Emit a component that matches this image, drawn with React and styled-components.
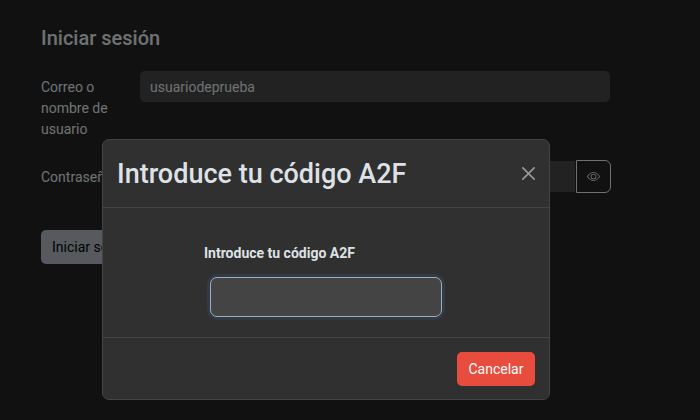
import React from "react";
import styled, { createGlobalStyle } from "styled-components";

const GlobalStyle = createGlobalStyle`
  *, *::before, *::after { box-sizing: border-box; }
  body {
    margin: 0;
    min-height: 100vh;
    background: #222;
    color: #dee2e6;
    font-family: Roboto, "Liberation Sans", sans-serif;
    font-size: 14px;
    line-height: 22px;
  }
  button, input { font: inherit; }
`;

const Page = styled.main`
  padding: 24px 89px 24px 41px;
`;

const PageTitle = styled.h1`
  margin: 0 0 18px;
  font-size: 20px;
  font-weight: 500;
  line-height: 28px;
`;

const Row = styled.div`
  display: grid;
  grid-template-columns: 74px 1fr;
  column-gap: 24px;
  align-items: start;
  margin-bottom: 20px;
`;

const Label = styled.label`
  padding-top: 7px;
  line-height: 21px;
`;

const InputGroup = styled.div`
  display: flex;
`;

const Field = styled.input`
  flex: 1;
  min-width: 0;
  height: 33px;
  padding: 0 10px;
  border: 1px solid #222;
  border-radius: ${({ $joined }) => ($joined ? "6px 0 0 6px" : "6px")};
  background: #444;
  color: #dee2e6;
  outline: 0;
`;

const RevealButton = styled.button`
  display: flex;
  align-items: center;
  justify-content: center;
  width: 35px;
  height: 33px;
  padding: 0;
  border: 1px solid #dee2e6;
  border-radius: 0 6px 6px 0;
  background: transparent;
  color: #dee2e6;
`;

const Button = styled.button`
  min-width: 78px;
  height: 34px;
  padding: 0 11px;
  border: 0;
  border-radius: 5px;
  background: ${({ $danger }) => ($danger ? "#e74c3c" : "#adb5bd")};
  color: ${({ $danger }) => ($danger ? "#fff" : "#000")};
`;

const FormActions = styled.div`
  padding-top: 17px;
`;

const Backdrop = styled.div`
  position: fixed;
  inset: 0;
  display: flex;
  justify-content: center;
  align-items: flex-start;
  padding: 139px 48px 20px 0;
  background: rgba(0, 0, 0, 0.5);
`;

const Dialog = styled.section`
  width: 100%;
  max-width: 448px;
  border: 1px solid #444;
  border-radius: 7px;
  background: #303030;
`;

const DialogHeader = styled.header`
  display: flex;
  align-items: center;
  justify-content: space-between;
  padding: 14px 14px 13px;
  border-bottom: 1px solid #444;
`;

const DialogTitle = styled.h2`
  margin: 0;
  font-size: 27px;
  font-weight: 500;
  line-height: 40px;
`;

const CloseButton = styled.button`
  display: flex;
  padding: 0 0 2px;
  border: 0;
  background: transparent;
  color: #fff;
  opacity: 0.5;
`;

const DialogBody = styled.div`
  display: flex;
  flex-direction: column;
  align-items: center;
  padding: 34px 0 20px;
`;

const CodeGroup = styled.div`
  display: flex;
  flex-direction: column;
  gap: 13px;
  width: 244px;
`;

const CodeLabel = styled.label`
  font-weight: 700;
`;

const CodeInput = styled.input`
  height: 40px;
  margin: 0 6px;
  padding: 0 10px;
  border: 1px solid #9badbf;
  border-radius: 7px;
  background: #444;
  color: #fff;
  outline: 0;
  box-shadow: 0 0 0 3px rgba(55, 90, 127, 0.25);
`;

const DialogFooter = styled.footer`
  display: flex;
  justify-content: flex-end;
  padding: 14px 14px 13px;
  border-top: 1px solid #444;
`;

const EyeIcon = () => (
  <svg width="13" height="13" viewBox="0 0 16 16" fill="currentColor" aria-hidden="true">
    <path d="M16 8s-3-5.5-8-5.5S0 8 0 8s3 5.5 8 5.5S16 8 16 8M1.173 8a13 13 0 0 1 1.66-2.043C4.12 4.668 5.88 3.5 8 3.5s3.879 1.168 5.168 2.457A13 13 0 0 1 14.828 8q-.086.13-.195.288c-.335.48-.83 1.12-1.465 1.755C11.879 11.332 10.119 12.5 8 12.5s-3.879-1.168-5.168-2.457A13 13 0 0 1 1.172 8z" />
    <path d="M8 5.5a2.5 2.5 0 1 0 0 5 2.5 2.5 0 0 0 0-5M4.5 8a3.5 3.5 0 1 1 7 0 3.5 3.5 0 0 1-7 0" />
  </svg>
);

const CloseIcon = () => (
  <svg width="13" height="13" viewBox="0 0 16 16" fill="currentColor" aria-hidden="true">
    <path d="M.293.293a1 1 0 0 1 1.414 0L8 6.586 14.293.293a1 1 0 1 1 1.414 1.414L9.414 8l6.293 6.293a1 1 0 0 1-1.414 1.414L8 9.414l-6.293 6.293a1 1 0 0 1-1.414-1.414L6.586 8 .293 1.707a1 1 0 0 1 0-1.414z" />
  </svg>
);

export default function App() {
  return (
    <>
      <GlobalStyle />
      <Page>
        <PageTitle>Iniciar sesión</PageTitle>
        <form onSubmit={(e) => e.preventDefault()}>
          <Row>
            <Label htmlFor="user">Correo o nombre de usuario</Label>
            <Field id="user" type="text" defaultValue="usuariodeprueba" />
          </Row>
          <Row>
            <Label htmlFor="password">Contraseña</Label>
            <InputGroup>
              <Field id="password" type="password" $joined />
              <RevealButton type="button" aria-label="Mostrar contraseña">
                <EyeIcon />
              </RevealButton>
            </InputGroup>
          </Row>
          <FormActions>
            <Button type="submit">Iniciar sesión</Button>
          </FormActions>
        </form>
      </Page>
      <Backdrop>
        <Dialog role="dialog" aria-modal="true" aria-labelledby="dialog-title">
          <DialogHeader>
            <DialogTitle id="dialog-title">Introduce tu código A2F</DialogTitle>
            <CloseButton type="button" aria-label="Cerrar">
              <CloseIcon />
            </CloseButton>
          </DialogHeader>
          <DialogBody>
            <CodeGroup>
              <CodeLabel htmlFor="code">Introduce tu código A2F</CodeLabel>
              <CodeInput id="code" type="text" />
            </CodeGroup>
          </DialogBody>
          <DialogFooter>
            <Button type="button" $danger>Cancelar</Button>
          </DialogFooter>
        </Dialog>
      </Backdrop>
    </>
  );
}
